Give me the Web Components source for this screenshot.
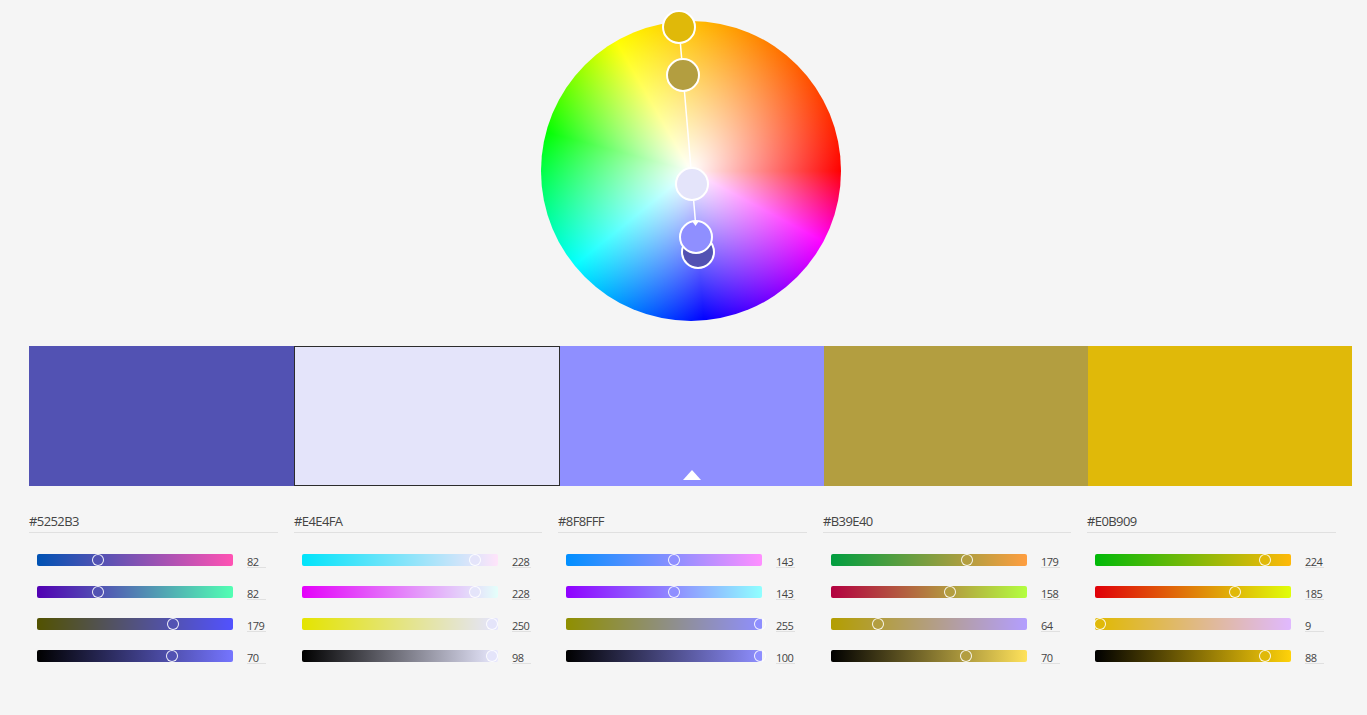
<!doctype html>
<html>
<head>
<meta charset="utf-8">
<title>Color wheel</title>
<style>
  html, body { margin: 0; height: 100%; background: #f5f5f5; }
  body { font-family: "Open Sans", "Noto Sans", sans-serif; overflow: hidden; }
  main { display: flex; flex-direction: column; padding: 0 15px 0 29px; }
</style>
</head>
<body>
<main>
  <color-wheel></color-wheel>
  <swatch-strip></swatch-strip>
  <rgb-panels></rgb-panels>
</main>
<script>
(function () {
  const COLORS = [
    { hex: "#5252B3", rgb: [82, 82, 179], bri: 70, top: "#7575FF" },
    { hex: "#E4E4FA", rgb: [228, 228, 250], bri: 98, top: "#E9E9FF", selected: true },
    { hex: "#8F8FFF", rgb: [143, 143, 255], bri: 100, top: "#8F8FFF", base: true },
    { hex: "#B39E40", rgb: [179, 158, 64], bri: 70, top: "#FFE25B" },
    { hex: "#E0B909", rgb: [224, 185, 9], bri: 88, top: "#FFD20A" },
  ];

  class ColorWheel extends HTMLElement {
    constructor() {
      super();
      this.attachShadow({ mode: "open" });
      this.shadowRoot.innerHTML = `
        <style>
        :host{
            display:block;
            position:relative;
            width:300px;
            height:300px;
            margin:21px auto 25px;
        }
        .disc{
            width:100%;
            height:100%;
            border-radius:50%;
            background:
              radial-gradient(closest-side, #fff 0%, rgba(255,255,255,.55) 45%, rgba(255,255,255,0) 100%),
              conic-gradient(#ffc000 0deg, #ff0000 90deg, #ff00ff 118deg, #0000ff 175deg,
                #00ffff 231deg, #00ff00 285deg, #ffff00 330deg, #ffc000 360deg);
        }
        svg{
            position:absolute;
            left:0;
            top:0;
            overflow:visible;
        }
        .handle{
            position:absolute;
            width:34px;
            height:34px;
            margin:-17px 0 0 -17px;
            box-sizing:border-box;
            border:2px solid #fff;
            border-radius:50%;
        }
        </style>
        <div class="disc"></div>
        <svg width="300" height="300" viewBox="0 0 300 300">
          <line x1="138" y1="6" x2="157" y2="231" stroke="#fff" stroke-width="1.5"/>
        </svg>
        <div class="handle" style="left:157px;top:231px;background:#5252B3"></div>
        <div class="handle" style="left:155px;top:216px;background:#8F8FFF"></div>
        <div class="handle" style="left:151px;top:163px;background:#E4E4FA"></div>
        <div class="handle" style="left:142px;top:54px;background:#B39E40"></div>
        <div class="handle" style="left:138px;top:6px;background:#E0B909"></div>
        <svg width="300" height="300" viewBox="0 0 300 300">
          <path d="M151 200h7l-3.5 5z" fill="#fff"/>
        </svg>
      `;
    }
  }

  class SwatchStrip extends HTMLElement {
    constructor() {
      super();
      this.attachShadow({ mode: "open" });
      const cells = COLORS.map(
        (c) =>
          `<div class="cell${c.selected ? " selected" : ""}" style="background:${c.hex}">${
            c.base ? '<span class="marker"></span>' : ""
          }</div>`
      ).join("");
      this.shadowRoot.innerHTML = `
        <style>
        :host{
            display:grid;
            grid-template-columns:265px 266px 264px 264px 264px;
            height:140px;
        }
        .cell{
            position:relative;
            box-sizing:border-box;
        }
        .selected{
            border:1px solid #2c2c2c;
        }
        .marker{
            position:absolute;
            left:50%;
            bottom:6px;
            margin-left:-9px;
            border-left:9px solid transparent;
            border-right:9px solid transparent;
            border-bottom:10px solid #fff;
        }
        </style>
        ${cells}
      `;
    }
  }

  class RgbSlider extends HTMLElement {
    connectedCallback() {
      if (this.shadowRoot) return;
      this.attachShadow({ mode: "open" });
      const value = this.getAttribute("value");
      const pos = Number(this.getAttribute("pos"));
      const fill = this.getAttribute("fill");
      // the fill stops where the track ends, only the ring goes past it
      const stop = 196 - (pos * 196 - 8) - 1;
      this.shadowRoot.innerHTML = `
        <style>
        :host{
            display:flex;
            align-items:flex-start;
            gap:14px;
            height:32px;
            padding-left:8px;
        }
        .track{
            position:relative;
            width:196px;
            height:12px;
            border-radius:2px;
            background:linear-gradient(to right, ${this.getAttribute("from")}, ${this.getAttribute("to")});
        }
        .thumb{
            position:absolute;
            left:calc(${pos * 100}% - 2px);
            top:0;
            width:12px;
            height:12px;
            margin-left:-6px;
            box-sizing:border-box;
            border:1px solid rgba(255,255,255,.9);
            border-radius:50%;
            background:linear-gradient(to right, ${fill} ${stop}px, transparent ${stop}px) no-repeat padding-box;
        }
        .value{
            width:19px;
            height:12px;
            margin-top:1px;
            border-bottom:1px solid #e0e0e0;
            font-size:11px;
            font-weight:500;
            letter-spacing:-.5px;
            line-height:14px;
            color:#444;
        }
        </style>
        <div class="track"><div class="thumb"></div></div>
        <div class="value">${value}</div>
      `;
    }
  }

  class RgbPanel extends HTMLElement {
    connectedCallback() {
      if (this.shadowRoot) return;
      this.attachShadow({ mode: "open" });
      this.shadowRoot.innerHTML = `
        <style>
        :host{
            display:block;
            padding-right:16px;
        }
        .title{
            height:27px;
            margin-bottom:21px;
            border-bottom:1px solid #e0e0e0;
            font-size:13px;
            font-weight:500;
            letter-spacing:-.6px;
            line-height:33px;
            color:#444;
        }
        </style>
        <div class="title">${this.getAttribute("hex")}</div>
        <slot></slot>
      `;
    }
  }

  class RgbPanels extends HTMLElement {
    constructor() {
      super();
      this.attachShadow({ mode: "open" });
      this.shadowRoot.innerHTML = `
        <style>
        :host{
            display:grid;
            grid-template-columns:265px 264px 265px 264px 265px;
            margin-top:19px;
        }
        </style>
      `;
      COLORS.forEach((c) => {
        const [r, g, b] = c.rgb;
        const rows = [
          [r, `rgb(0,${g},${b})`, `rgb(255,${g},${b})`, r / 255],
          [g, `rgb(${r},0,${b})`, `rgb(${r},255,${b})`, g / 255],
          [b, `rgb(${r},${g},0)`, `rgb(${r},${g},255)`, b / 255],
          [c.bri, "#000", c.top, c.bri / 100],
        ];
        const panel = document.createElement("rgb-panel");
        panel.setAttribute("hex", c.hex);
        rows.forEach((row) => {
          const slider = document.createElement("rgb-slider");
          slider.setAttribute("value", row[0]);
          slider.setAttribute("from", row[1]);
          slider.setAttribute("to", row[2]);
          slider.setAttribute("pos", row[3]);
          slider.setAttribute("fill", c.hex);
          panel.appendChild(slider);
        });
        this.shadowRoot.appendChild(panel);
      });
    }
  }

  customElements.define("color-wheel", ColorWheel);
  customElements.define("swatch-strip", SwatchStrip);
  customElements.define("rgb-slider", RgbSlider);
  customElements.define("rgb-panel", RgbPanel);
  customElements.define("rgb-panels", RgbPanels);
})();
</script>
</body>
</html>
